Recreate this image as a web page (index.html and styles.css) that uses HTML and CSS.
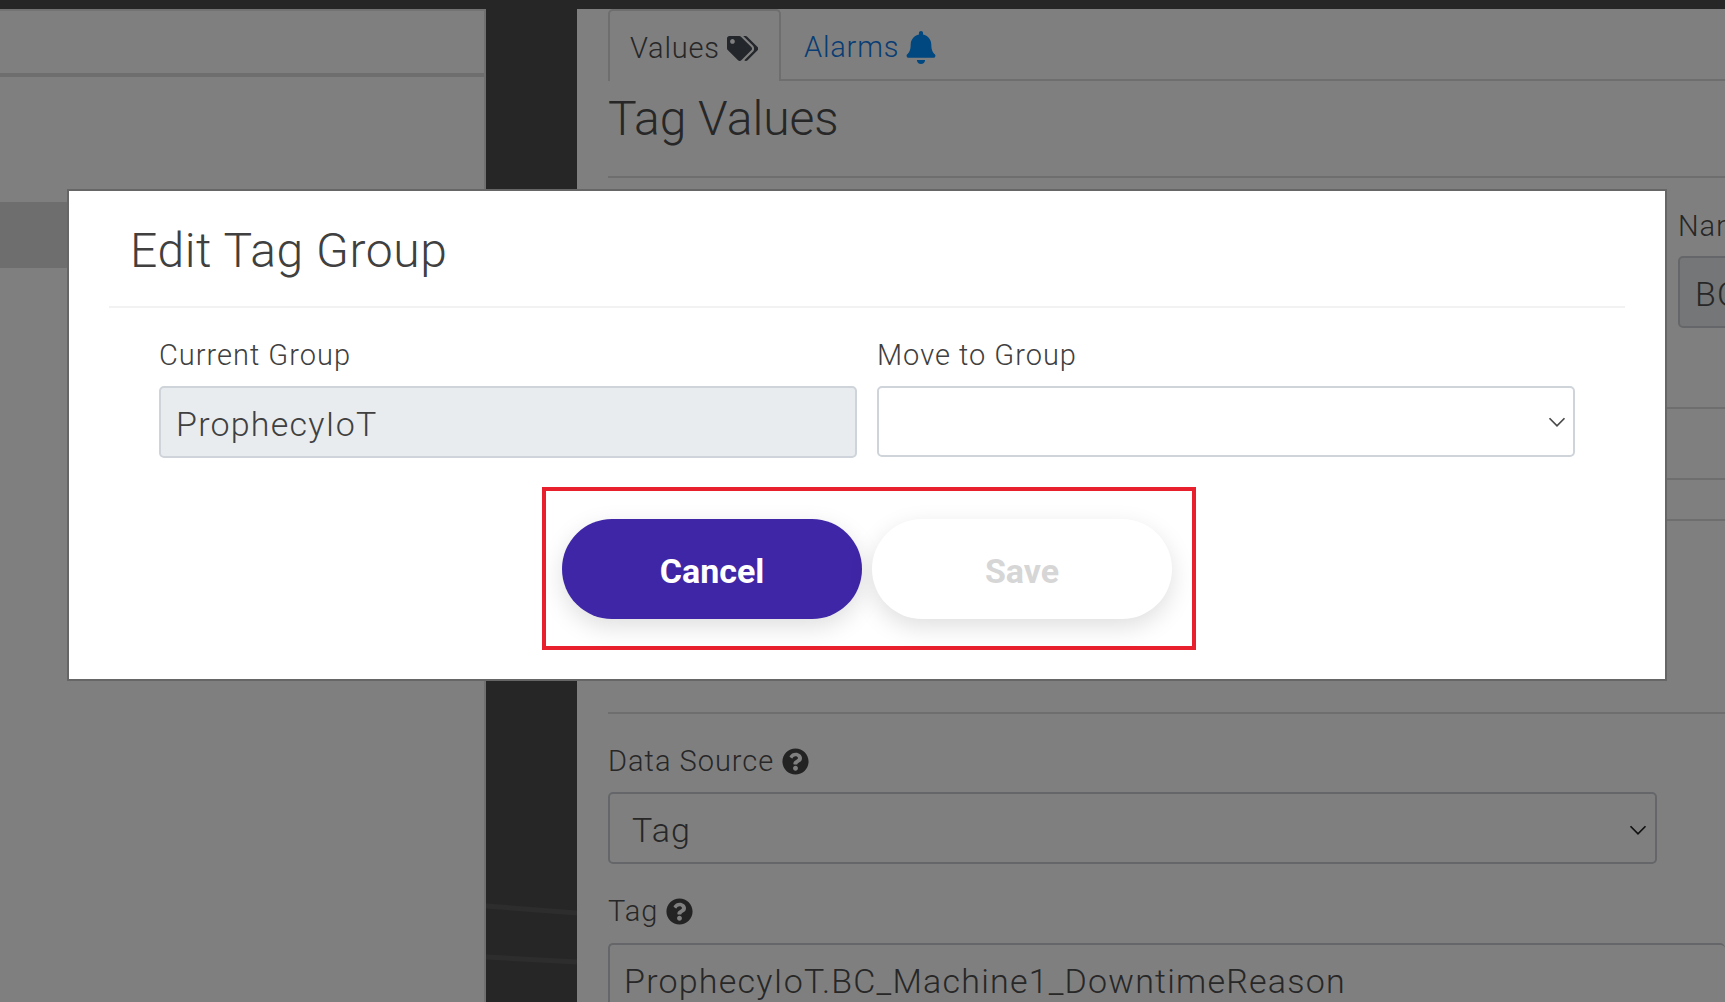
FILE: index.html

```html
<!DOCTYPE html>
<html lang="en">
<head>
    <meta charset="UTF-8">
    <meta name="viewport" content="width=device-width, initial-scale=1.0">
    <title>Edit Tag Group</title>
    <link rel="stylesheet" href="styles.css">
</head>
<body>
    <div class="page">
        <aside class="side-panel">
            <div class="side-head"></div>
            <div class="side-item"></div>
        </aside>
        <div class="gutter">
            <svg class="gutter-lines" width="91" height="1002" viewBox="0 0 91 1002">
                <path d="M0 897 L91 904" stroke="#5a5a5a" stroke-width="5" fill="none"/>
                <path d="M0 948 L91 953" stroke="#5a5a5a" stroke-width="5" fill="none"/>
            </svg>
        </div>
        <main class="content">
            <ul class="tabs">
                <li class="tab tab-active">Values
                    <svg class="tab-icon" width="34" height="27" viewBox="0 0 640 512"><path d="M497.941 225.941L286.059 14.059A48 48 0 0 0 252.118 0H48C21.49 0 0 21.49 0 48v204.118a48 48 0 0 0 14.059 33.941l211.882 211.882c18.744 18.745 49.136 18.746 67.882 0l204.118-204.118c18.745-18.745 18.745-49.137 0-67.882zM112 160c-26.51 0-48-21.49-48-48s21.49-48 48-48 48 21.49 48 48-21.49 48-48 48zm513.941 133.823L421.823 497.941c-18.745 18.745-49.137 18.745-67.882 0l-.36-.36L527.64 323.522c16.999-16.999 26.36-39.6 26.36-63.64s-9.362-46.641-26.36-63.64L331.397 0h48.721a48 48 0 0 1 33.941 14.059l211.882 211.882c18.745 18.745 18.745 49.137 0 67.882z"/></svg>
                </li>
                <li class="tab tab-link">Alarms
                    <svg class="tab-icon" width="30" height="33" viewBox="0 0 448 512"><path d="M224 512c35.32 0 63.97-28.65 63.97-64H160.03c0 35.35 28.65 64 63.97 64zm215.39-149.71c-19.32-20.76-55.47-51.99-55.47-154.29 0-77.7-54.48-139.9-127.94-155.16V32c0-17.67-14.32-32-31.98-32s-31.98 14.33-31.98 32v20.84C118.56 68.1 64.08 130.3 64.08 208c0 102.3-36.15 133.53-55.47 154.29-6 6.45-8.66 14.16-8.61 21.71.11 16.4 12.98 32 32.1 32h383.8c19.12 0 32-15.6 32.1-32 .05-7.55-2.61-15.27-8.61-21.71z"/></svg>
                </li>
            </ul>
            <h2 class="page-title">Tag Values</h2>
            <div class="name-row">
                <div class="name-field">
                    <label class="field-label">Name</label>
                    <div class="bg-input bg-input-off">BC_Machine1</div>
                </div>
            </div>
            <div class="blank-row blank-row-a"></div>
            <div class="blank-row blank-row-b"></div>
            <div class="blank-row blank-row-c"></div>
            <section class="source-section">
                <label class="field-label">Data Source
                    <svg class="help-icon" width="27" height="27" viewBox="0 0 512 512"><path d="M504 256c0 136.997-111.043 248-248 248S8 392.997 8 256C8 119.083 119.043 8 256 8s248 111.083 248 248zM262.655 90c-54.497 0-89.255 22.957-116.549 63.758-3.536 5.286-2.353 12.415 2.715 16.258l34.699 26.31c5.205 3.947 12.621 3.008 16.665-2.122 17.864-22.658 30.113-35.797 57.303-35.797 20.429 0 45.698 13.148 45.698 32.958 0 14.976-12.363 22.667-32.534 33.976C247.128 238.528 216 254.941 216 296v4c0 6.627 5.373 12 12 12h56c6.627 0 12-5.373 12-12v-1.333c0-28.462 83.186-29.647 83.186-106.667 0-58.002-60.165-102-116.531-102zM256 338c-25.365 0-46 20.635-46 46 0 25.364 20.635 46 46 46s46-20.636 46-46c0-25.365-20.635-46-46-46z"/></svg>
                </label>
                <div class="bg-input bg-select">
                    <span>Tag</span>
                    <svg class="chevron" width="20" height="20" viewBox="0 0 16 16"><path d="M2 5l6 6 6-6" fill="none" stroke="#222" stroke-width="1.4"/></svg>
                </div>
                <label class="field-label tag-label">Tag
                    <svg class="help-icon" width="27" height="27" viewBox="0 0 512 512"><path d="M504 256c0 136.997-111.043 248-248 248S8 392.997 8 256C8 119.083 119.043 8 256 8s248 111.083 248 248zM262.655 90c-54.497 0-89.255 22.957-116.549 63.758-3.536 5.286-2.353 12.415 2.715 16.258l34.699 26.31c5.205 3.947 12.621 3.008 16.665-2.122 17.864-22.658 30.113-35.797 57.303-35.797 20.429 0 45.698 13.148 45.698 32.958 0 14.976-12.363 22.667-32.534 33.976C247.128 238.528 216 254.941 216 296v4c0 6.627 5.373 12 12 12h56c6.627 0 12-5.373 12-12v-1.333c0-28.462 83.186-29.647 83.186-106.667 0-58.002-60.165-102-116.531-102zM256 338c-25.365 0-46 20.635-46 46 0 25.364 20.635 46 46 46s46-20.636 46-46c0-25.365-20.635-46-46-46z"/></svg>
                </label>
                <div class="bg-input bg-tag">ProphecyIoT.BC_Machine1_DowntimeReason</div>
            </section>
        </main>
    </div>

    <div class="backdrop"></div>

    <div class="modal">
        <div class="modal-header">
            <h2 class="modal-title">Edit Tag Group</h2>
        </div>
        <div class="modal-fields">
            <div class="modal-field">
                <label class="modal-label">Current Group</label>
                <div class="control control-off">ProphecyIoT</div>
            </div>
            <div class="modal-field">
                <label class="modal-label">Move to Group</label>
                <div class="control control-select">
                    <svg class="chevron" width="20" height="20" viewBox="0 0 16 16"><path d="M2 5l6 6 6-6" fill="none" stroke="#4a4a4a" stroke-width="1.4"/></svg>
                </div>
            </div>
        </div>
        <div class="modal-actions">
            <div class="action-box">
                <button class="btn btn-cancel">Cancel</button>
                <button class="btn btn-save">Save</button>
            </div>
        </div>
    </div>
</body>
</html>
```

FILE: styles.css

```css
/* Base Styles */
* {
    box-sizing: border-box;
}

html, body {
    margin: 0;
    padding: 0;
    height: 1002px;
    overflow: hidden;
}

body {
    font-family: 'Roboto', 'Liberation Sans', sans-serif;
    font-weight: 300;
    background-color: #4c4c4c;
    color: #4e4e4e;
}

/* Page behind the dialog */
.page {
    display: grid;
    grid-template-columns: 486px 91px 1fr;
    height: 1002px;
    padding-top: 9px;
}

.side-panel {
    background-color: #fff;
    border-top: 2px solid #e6e6e6;
    border-right: 2px solid #e0e0e0;
}

.side-head {
    height: 66px;
    border-bottom: 4px solid #dcdcdc;
}

.side-item {
    height: 66px;
    margin-top: 125px;
    background-color: #dcdcdc;
}

.gutter {
    position: relative;
    overflow: hidden;
}

.gutter-lines {
    position: absolute;
    top: 0;
    left: 0;
}

.content {
    background-color: #fff;
    padding-left: 31px;
    overflow: hidden;
}

.tabs {
    list-style: none;
    margin: 0;
    padding: 0;
    display: flex;
    height: 72px;
    border-bottom: 2px solid #dcdcdc;
}

.tab {
    display: flex;
    align-items: center;
    gap: 7px;
    padding: 4px 21px 0 20px;
    font-size: 29px;
    letter-spacing: 0.8px;
    height: 72px;
}

.tab-active {
    width: 173px;
    border: 2px solid #dcdcdc;
    border-bottom: none;
    border-radius: 5px 5px 0 0;
    background-color: #fff;
}

.tab-active .tab-icon {
    fill: #474c55;
}

.tab-link {
    color: #0f7ae8;
    padding-left: 23px;
}

.tab-link .tab-icon {
    fill: #0090ff;
}

.page-title {
    margin: 0;
    height: 97px;
    padding-top: 10px;
    font-size: 48px;
    line-height: 56px;
    font-weight: 300;
    border-bottom: 2px solid #dcdcdc;
}

.name-row {
    display: flex;
    justify-content: flex-end;
    height: 231px;
    padding-top: 30px;
    border-bottom: 2px solid #dcdcdc;
    overflow: hidden;
}

.name-field {
    width: 47px;
    flex-shrink: 0;
    white-space: nowrap;
}

.blank-row-a {
    height: 71px;
    border-bottom: 2px solid #dcdcdc;
}

.blank-row-b {
    height: 41px;
    border-bottom: 2px solid #dcdcdc;
}

.blank-row-c {
    height: 193px;
    border-bottom: 2px solid #dcdcdc;
}

.field-label {
    display: flex;
    align-items: center;
    gap: 8px;
    font-size: 29px;
    letter-spacing: 1px;
    line-height: 36px;
}

.source-section {
    padding-top: 29px;
}

.help-icon {
    fill: #474747;
}

.bg-input {
    border: 2px solid #c9cdd2;
    border-radius: 5px;
    background-color: #fff;
    font-size: 34px;
    letter-spacing: 1.2px;
    height: 72px;
    display: flex;
    align-items: center;
    white-space: nowrap;
}

.name-field .bg-input {
    margin-top: 12px;
    width: 200px;
    padding: 4px 0 0 15px;
    background-color: #e9ecef;
}

.bg-select {
    justify-content: space-between;
    margin-top: 13px;
    width: 1049px;
    padding: 4px 7px 0 22px;
}

.tag-label {
    margin-top: 29px;
}

.bg-tag {
    margin-top: 14px;
    padding: 4px 0 0 14px;
    border-right: none;
}

/* Dialog */
.backdrop {
    position: fixed;
    top: 0;
    left: 0;
    width: 100%;
    height: 100%;
    background-color: rgba(0, 0, 0, 0.5);
}

.modal {
    position: fixed;
    top: 189px;
    left: 67px;
    width: 1600px;
    height: 492px;
    background-color: #fff;
    border: 2px solid #666;
}

.modal-header {
    height: 117px;
    margin: 0 40px;
    padding: 27px 0 0 21px;
    border-bottom: 2px solid #f2f2f2;
}

.modal-title {
    margin: 0;
    font-size: 48px;
    letter-spacing: 0.6px;
    line-height: 66px;
    font-weight: 300;
    color: #404040;
}

.modal-fields {
    display: grid;
    grid-template-columns: 698px 698px;
    gap: 20px;
    padding: 29px 0 0 90px;
}

.modal-label {
    display: block;
    font-size: 29px;
    letter-spacing: 1px;
    line-height: 36px;
    color: #404040;
}

.control {
    height: 72px;
    margin-top: 13px;
    border: 2px solid #ced4da;
    border-radius: 5px;
    display: flex;
    align-items: center;
    font-size: 34px;
    letter-spacing: 1.2px;
    color: #404040;
}

.control-off {
    background-color: #e9ecef;
    padding: 4px 0 0 15px;
}

.control-select {
    height: 71px;
    justify-content: flex-end;
    padding-right: 6px;
}

.modal-actions {
    display: flex;
    justify-content: center;
    padding: 29px 0 0 4px;
}

.action-box {
    display: flex;
    gap: 10px;
    height: 163px;
    padding: 28px 20px 27px 16px;
    border: 4px solid #e8202e;
}

.btn {
    width: 300px;
    height: 100px;
    border: none;
    border-radius: 50px;
    padding-top: 5px;
    font-family: inherit;
    font-size: 34px;
    font-weight: 700;
    box-shadow: 0 8px 24px rgba(0, 0, 0, 0.13);
}

.btn-cancel {
    background-color: #3f26a6;
    color: #fff;
}

.btn-save {
    background-color: #fff;
    color: #d6d6d6;
}
```
